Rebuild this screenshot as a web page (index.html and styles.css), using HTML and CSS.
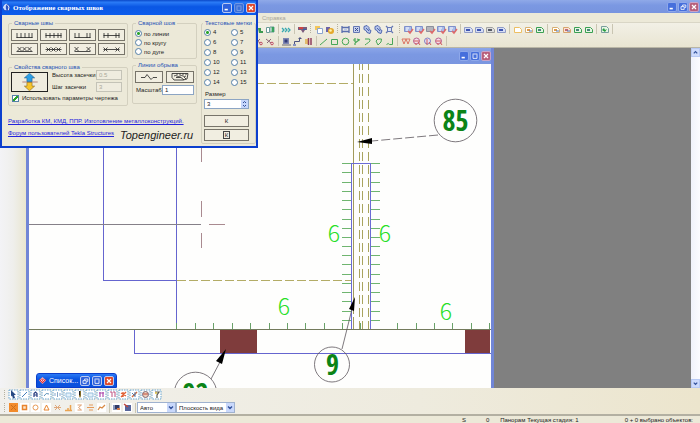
FILE: index.html
```html
<!DOCTYPE html>
<html lang="ru">
<head>
<meta charset="utf-8">
<title>Отображение сварных швов</title>
<link rel="stylesheet" href="styles.css">
</head>
<body>
<svg class="defs" aria-hidden="true">
  <defs>
    <symbol id="min" viewBox="0 0 10 10"><path d="M2 7h4" stroke="#fff" stroke-width="2"/></symbol>
    <symbol id="max" viewBox="0 0 10 10"><path d="M2 2.500h6M2.500 3v5h5V3" fill="none" stroke="#fff"/></symbol>
    <symbol id="restore" viewBox="0 0 10 10"><path d="M4.500 4V2.500h4v3H7M2.500 4.500h4v3.500h-4z" fill="none" stroke="#fff"/></symbol>
    <symbol id="close" viewBox="0 0 10 10"><path d="M2.500 2.500l5 5M7.500 2.500l-5 5" stroke="#fff" stroke-width="1.500"/></symbol>
    <symbol id="down" viewBox="0 0 8 8"><path d="M2 3l2 2 2-2" fill="none" stroke="#33529c" stroke-width="1.400"/></symbol>
    <symbol id="up" viewBox="0 0 8 8"><path d="M2 5l2-2 2 2" fill="none" stroke="#33529c" stroke-width="1.400"/></symbol>

    <symbol id="t-tree" viewBox="0 0 11 11"><path d="M1 2l4 3-3 3z" fill="#e0c030"/><path d="M4 4h3v3h2v2H5z" fill="#3c9a50"/></symbol>
    <symbol id="t-panel" viewBox="0 0 11 11"><path d="M1.500 3.500h3v5h-3zM5 3h4v5H5z" fill="#fff" stroke="#6c9a98"/><path d="M6.500 3h2.500v5H6.500z" fill="#38a25e"/></symbol>
    <symbol id="t-wave" viewBox="0 0 11 11"><path d="M1 4l2 2-2 2M4 4l2 2-2 2M7 4l2 2-2 2" fill="none" stroke="#38a9b0" stroke-width="1.300"/></symbol>
    <symbol id="t-filter" viewBox="0 0 11 11"><path d="M1 3h9v3H8l-2 3-2-3H1z" fill="#7a5b7c"/><path d="M2 3h4v2H2z" fill="#c44"/><path d="M6 5h3v1H6z" fill="#36a"/></symbol>
    <symbol id="t-copy" viewBox="0 0 11 11"><path d="M2 2h5v4H2z" fill="#f3c65a"/><path d="M4.500 4.500h5v5h-5z" fill="#fff" stroke="#8ba4cf"/></symbol>
    <symbol id="t-db" viewBox="0 0 11 11"><path d="M2 3h4v5H2z" fill="#6b62a8"/><circle cx="7" cy="7" r="3" fill="#e5a92c"/><circle cx="6.500" cy="6.500" r="1.300" fill="#fff2b0"/></symbol>
    <symbol id="t-dim" viewBox="0 0 11 11"><path d="M2 2v7M9 2v7M2 3.500h7M2 7.500h7" stroke="#5a6fae" stroke-width="1.300"/><path d="M4 4.500h3v2H4z" fill="#b9c7ea"/></symbol>
    <symbol id="t-box" viewBox="0 0 11 11"><path d="M2.500 2.500h6v6h-6z" fill="#c7d1ed" stroke="#6477b3"/><path d="M4 4l3 3M7 4L4 7" stroke="#34488d"/></symbol>
    <symbol id="t-cubes" viewBox="0 0 11 11"><path d="M2 2.500l3-1 2 2v2l2 1-1 3-3-1-1-2-2-1z" fill="#b7c5ea" stroke="#5068b0"/><path d="M4 4l3 3" stroke="#5068b0"/></symbol>
    <symbol id="t-cross" viewBox="0 0 11 11"><path d="M2 2l7 7M9 2L2 9" stroke="#6477b3" stroke-width="1.300"/><path d="M3.500 3.500h4v4h-4z" fill="#dbe2f5" stroke="#6477b3"/></symbol>
    <symbol id="t-check" viewBox="0 0 11 11"><path d="M1.500 2.500h7v5h-7z" fill="#aabbe8" stroke="#7f90cb"/><path d="M3 4h3M3 6h2" stroke="#fff"/><path d="M5 7l2 2 3-4" fill="none" stroke="#e06a6a" stroke-width="1.500"/></symbol>
    <symbol id="t-checkg" viewBox="0 0 11 11"><path d="M1.500 2.500h7v5h-7z" fill="#b5b5bc" stroke="#8b8f9c"/><path d="M5 7l2 2 3-4" fill="none" stroke="#e06a6a" stroke-width="1.500"/></symbol>
    <symbol id="t-view" viewBox="0 0 11 11"><path d="M1.500 3.500h6l2 2v3h-8z" fill="#d7def5" stroke="#8f9bc6"/><path d="M3 5h4v2H3z" fill="#3e55b0"/></symbol>
    <symbol id="t-viewk" viewBox="0 0 11 11"><path d="M1.500 3.500h6l2 2v3h-8z" fill="#dedede" stroke="#a0a0a0"/><path d="M3 5h4v2H3z" fill="#555a66"/></symbol>
    <symbol id="t-page" viewBox="0 0 11 11"><path d="M2.500 3.500h5l2 2v3h-7z" fill="#fff" stroke="#edbf63"/></symbol>
    <symbol id="t-pageo" viewBox="0 0 11 11"><path d="M2.500 3.500h5l2 2v3h-7z" fill="#fff" stroke="#d6b074"/><path d="M4 5h3v2H4z" fill="#e09a45"/><path d="M6 7h3" stroke="#507abb"/></symbol>
    <symbol id="t-pager" viewBox="0 0 11 11"><path d="M2.500 3.500h5l2 2v3h-7z" fill="#fbe1d4" stroke="#d7a46e"/><path d="M4 5h3v2H4z" fill="#c06b75"/><path d="M6 7h3" stroke="#507abb"/></symbol>
    <symbol id="t-pageg" viewBox="0 0 11 11"><path d="M2.500 3.500h5l2 2v3h-7z" fill="#e7f6e4" stroke="#3aa052"/><path d="M4 5h3v2H4z" fill="#4a8578"/></symbol>
    <symbol id="t-refresh" viewBox="0 0 11 11"><path d="M2.500 2.500h5l2 2v4h-7z" fill="#e7f6e4" stroke="#7a9e9d"/><path d="M3 6l2-2 1 2 2-1-2 3z" fill="#259b3f"/></symbol>

    <symbol id="d-cut" viewBox="0 0 11 11"><path d="M1 3l5 4M6 3L2 7" stroke="#8d6478"/><circle cx="7" cy="7.500" r="1.300" fill="none" stroke="#c04c66"/></symbol>
    <symbol id="d-sq" viewBox="0 0 11 11"><path d="M2 2h6v6H2z" fill="#8088b4"/><path d="M3.500 3.500h3v3h-3z" fill="#323b78"/><path d="M1 9h9" stroke="#667"/></symbol>
    <symbol id="d-step" viewBox="0 0 11 11"><path d="M2.500 9V5.500h5V3" fill="none" stroke="#4d5380"/><path d="M6 3h4L8 1z" fill="#4d5380"/><path d="M1 8h3v2H1z" fill="#8893c0"/></symbol>
    <symbol id="d-book" viewBox="0 0 11 11"><path d="M2 3h3v5H2z" fill="#e3bd6c"/><path d="M5.500 2v7M8 2v7" stroke="#903e5d" stroke-width="1.500"/></symbol>
    <symbol id="d-line" viewBox="0 0 11 11"><path d="M2 9l7-6" stroke="#47a757"/></symbol>
    <symbol id="d-rect" viewBox="0 0 11 11"><path d="M2.500 3.500h6v5h-6z" fill="none" stroke="#47a757"/></symbol>
    <symbol id="d-circ" viewBox="0 0 11 11"><circle cx="5.500" cy="5.500" r="3.300" fill="none" stroke="#47a757"/></symbol>
    <symbol id="d-dots" viewBox="0 0 11 11"><path d="M2 4h2M4 2v4M4 7l4-3M6 3l3 1M4 7v2" fill="none" stroke="#47a757" stroke-width="1.200"/></symbol>
    <symbol id="d-arc" viewBox="0 0 11 11"><path d="M3 3h4.500q1.500 2-1 3.500T3 9" fill="none" stroke="#47a757"/></symbol>
    <symbol id="d-poly" viewBox="0 0 11 11"><path d="M3 5l2-2h3.500L8 6 5 9z" fill="none" stroke="#47a757"/></symbol>
    <symbol id="d-cloud" viewBox="0 0 11 11"><path d="M8.500 2v6.500H5.500q-1-2-3 0" fill="none" stroke="#47a757"/></symbol>
    <symbol id="d-red" viewBox="0 0 11 11"><path d="M2 3l2 5 2-5 2 5 2-5M2 3h8" fill="none" stroke="#dc7664"/></symbol>
    <symbol id="d-mag" viewBox="0 0 11 11"><circle cx="5.500" cy="5" r="3" fill="#f4dcea" stroke="#ba6492"/><path d="M3 5h5M5 7v2M7 6l2 3" stroke="#d15b5b"/></symbol>
    <symbol id="d-vio" viewBox="0 0 11 11"><circle cx="5.500" cy="5" r="3" fill="#e8e0f6" stroke="#8580c0"/><path d="M5 3v6M7 6l2 3" stroke="#d15b5b"/></symbol>

    <symbol id="s-frame" viewBox="0 0 11 11"><path d="M1 1h9v9H1z" fill="#fff" stroke="#69a5cf" stroke-dasharray="1.500 1"/></symbol>
    <symbol id="s-arrow" viewBox="0 0 11 11"><use href="#s-frame"/><path d="M3 1l5 5H6l1 3-2 .500-1-3-1 1z" fill="#274a84"/></symbol>
    <symbol id="s-line" viewBox="0 0 11 11"><use href="#s-frame"/><path d="M3 8l5-5" stroke="#447ebb"/></symbol>
    <symbol id="s-a" viewBox="0 0 11 11"><use href="#s-frame"/><path d="M4 8V4.500l1.500-1.500L7 4.500V8M4 6h3" fill="none" stroke="#283d80" stroke-width="1.200"/></symbol>
    <symbol id="s-arc" viewBox="0 0 11 11"><use href="#s-frame"/><path d="M3 7q2-4 5-2" fill="none" stroke="#5c91b9"/></symbol>
    <symbol id="s-dim" viewBox="0 0 11 11"><use href="#s-frame"/><path d="M3 4v3M5.500 3v5M8 4v3" stroke="#86a5c8"/></symbol>
    <symbol id="s-sq" viewBox="0 0 11 11"><use href="#s-frame"/><path d="M3 4h5v4H3z" fill="#e3f1fa" stroke="#98c0dd"/></symbol>
    <symbol id="s-pen" viewBox="0 0 11 11"><use href="#s-frame"/><path d="M5 2h2v5L6 9 5 7z" fill="#806b28"/><path d="M5 2h1v4H5z" fill="#222"/></symbol>
    <symbol id="s-mag" viewBox="0 0 11 11"><use href="#s-frame"/><path d="M3 4h5M4 3v5M7 3v5" stroke="#ad4cad" stroke-width="1.200"/></symbol>
    <symbol id="s-pink" viewBox="0 0 11 11"><use href="#s-frame"/><path d="M3 3h2v5M6 3h2v5" fill="none" stroke="#bc4f7e"/></symbol>
    <symbol id="s-red" viewBox="0 0 11 11"><use href="#s-frame"/><path d="M3 8l5-5M3 4l5 3M5 3v5" stroke="#e06035" stroke-width="1.400"/></symbol>
    <symbol id="s-mix" viewBox="0 0 11 11"><use href="#s-frame"/><path d="M3 8l5-5" stroke="#d06a3e" stroke-width="1.500"/><path d="M3 4l3 3M6 3v5" stroke="#527dad"/></symbol>
    <symbol id="s-globe" viewBox="0 0 11 11"><use href="#s-frame"/><circle cx="5.500" cy="5.500" r="3" fill="#f1d1bd" stroke="#7a6876"/><path d="M3 5h5" stroke="#ba4c3d"/></symbol>
    <symbol id="s-bulb" viewBox="0 0 11 11"><use href="#s-frame"/><path d="M4 3h4L6 6v3" fill="none" stroke="#5a5a50" stroke-width="1.200"/><circle cx="5" cy="4" r="1" fill="#dfc340"/></symbol>

    <symbol id="o-x" viewBox="0 0 11 11"><path d="M1 1h9v9H1z" fill="#f28b2b"/><path d="M3 3l5 5M8 3L3 8" stroke="#c96f1c"/></symbol>
    <symbol id="o-sq" viewBox="0 0 11 11"><path d="M1 1h9v9H1z" fill="#fff"/><path d="M3.500 3.500h4v4h-4z" fill="#ffe4c6" stroke="#e8842e" stroke-width="1.500"/></symbol>
    <symbol id="o-circ" viewBox="0 0 11 11"><path d="M1 1h9v9H1z" fill="#fff"/><circle cx="5.500" cy="5.500" r="2.500" fill="none" stroke="#e89a55"/></symbol>
    <symbol id="o-tri" viewBox="0 0 11 11"><path d="M1 1h9v9H1z" fill="#fff"/><path d="M5.500 3L8 8H3z" fill="none" stroke="#e8842e"/></symbol>
    <symbol id="o-cross" viewBox="0 0 11 11"><path d="M3 3l5 5M8 3L3 8M2 5.500h7" stroke="#dfa77b"/></symbol>
    <symbol id="o-perp" viewBox="0 0 11 11"><path d="M2 8.500h7M7.500 3v5M5 6v2" stroke="#eba451" stroke-width="1.500"/></symbol>
    <symbol id="o-hour" viewBox="0 0 11 11"><path d="M1 1h9v9H1z" fill="#fff"/><path d="M3.500 3h4l-3 2.500 3 2.500h-4" fill="none" stroke="#e0a070"/></symbol>
    <symbol id="o-ext" viewBox="0 0 11 11"><path d="M2 5.500h3M4 3h4M5 5.500h4M4 8h4" stroke="#e59a5a"/></symbol>
    <symbol id="o-free" viewBox="0 0 11 11"><path d="M1 1h9v9H1z" fill="#fff"/><path d="M2 8l2-3 2 1 3-3" fill="none" stroke="#d98a45" stroke-width="1.300"/></symbol>
    <symbol id="o-dark" viewBox="0 0 11 11"><path d="M1 1h9v9H1z" fill="#fff"/><path d="M2 3h7v5H2z" fill="#8a98bb"/><path d="M4 3h4v4H4z" fill="#333b66"/><path d="M6 6h3v2H6z" fill="#d77d4a"/></symbol>
    <symbol id="o-dark2" viewBox="0 0 11 11"><path d="M1 1h9v9H1z" fill="#fff"/><path d="M3 3h6v6H3z" fill="#57659b"/><path d="M2 2l4 3" stroke="#c5483c" stroke-width="1.500"/></symbol>
  </defs>
</svg>

<div class="app">
  <header class="app-title">
    <button class="win muted" aria-label="Свернуть"><svg><use href="#min"/></svg></button>
    <button class="win muted" aria-label="Восстановить"><svg><use href="#restore"/></svg></button>
    <button class="win muted red" aria-label="Закрыть"><svg><use href="#close"/></svg></button>
  </header>
  <nav class="menu"><a href="#">Справка</a></nav>
  <div class="bars">
    <div class="bar offset">
      <button aria-label="Дерево"><svg><use href="#t-tree"/></svg></button><button aria-label="Панель"><svg><use href="#t-panel"/></svg></button>
      <i class="sep"></i>
      <button aria-label="Волны"><svg><use href="#t-wave"/></svg></button>
      <i class="sep"></i>
      <button aria-label="Фильтр"><svg><use href="#t-filter"/></svg></button>
      <i class="sep grip"></i>
      <button aria-label="Копия"><svg><use href="#t-copy"/></svg></button><button aria-label="База"><svg><use href="#t-db"/></svg></button>
      <i class="sep grip"></i>
      <button aria-label="Размер"><svg><use href="#t-dim"/></svg></button><button aria-label="Блок"><svg><use href="#t-box"/></svg></button><button aria-label="Блоки"><svg><use href="#t-cubes"/></svg></button><button aria-label="Сборка"><svg><use href="#t-cubes"/></svg></button><button aria-label="Узел"><svg><use href="#t-cross"/></svg></button>
      <i class="sep grip wide"></i>
      <button aria-label="Метка детали"><svg><use href="#t-check"/></svg></button><button aria-label="Метка болта"><svg><use href="#t-check"/></svg></button><button aria-label="Метка шва"><svg><use href="#t-checkg"/></svg></button><button aria-label="Метка узла"><svg><use href="#t-check"/></svg></button><button aria-label="Метка вида"><svg><use href="#t-check"/></svg></button>
      <i class="sep"></i>
      <button aria-label="Вид 1"><svg><use href="#t-view"/></svg></button><button aria-label="Вид 2"><svg><use href="#t-view"/></svg></button><button aria-label="Вид 3"><svg><use href="#t-viewk"/></svg></button><button aria-label="Вид 4"><svg><use href="#t-view"/></svg></button>
      <i class="sep"></i>
      <button aria-label="Лист"><svg><use href="#t-page"/></svg></button><button aria-label="Лист 2"><svg><use href="#t-pageo"/></svg></button><button aria-label="Лист 3"><svg><use href="#t-pageg"/></svg></button>
      <i class="sep"></i>
      <button aria-label="Чертёж 1"><svg><use href="#t-pageo"/></svg></button><button aria-label="Чертёж 2"><svg><use href="#t-pager"/></svg></button><button aria-label="Чертёж 3"><svg><use href="#t-pageg"/></svg></button><button aria-label="Чертёж 4"><svg><use href="#t-pageg"/></svg></button>
      <i class="sep"></i>
      <button aria-label="Обновить"><svg><use href="#t-refresh"/></svg></button>
      <i class="sep narrow"></i>
    </div>
    <div class="bar offset">
      <button aria-label="Обрезать"><svg><use href="#d-cut"/></svg></button><button aria-label="Разделить"><svg><use href="#d-cut"/></svg></button>
      <i class="sep"></i>
      <button aria-label="Символ"><svg><use href="#d-sq"/></svg></button><button aria-label="Выноска"><svg><use href="#d-step"/></svg></button><button aria-label="Каталог"><svg><use href="#d-book"/></svg></button>
      <i class="sep narrow"></i>
      <button aria-label="Линия"><svg><use href="#d-line"/></svg></button><button aria-label="Прямоугольник"><svg><use href="#d-rect"/></svg></button><button aria-label="Окружность"><svg><use href="#d-circ"/></svg></button><button aria-label="Точки"><svg><use href="#d-dots"/></svg></button><button aria-label="Дуга"><svg><use href="#d-arc"/></svg></button><button aria-label="Многоугольник"><svg><use href="#d-poly"/></svg></button><button aria-label="Облако"><svg><use href="#d-cloud"/></svg></button>
      <i class="sep"></i>
      <button aria-label="Швы"><svg><use href="#d-red"/></svg></button><button aria-label="Швы 2"><svg><use href="#d-mag"/></svg></button><button aria-label="Швы 3"><svg><use href="#d-vio"/></svg></button><button aria-label="Швы 4"><svg><use href="#d-mag"/></svg></button>
      <i class="sep narrow"></i>
    </div>
  </div>

  <main class="workspace">
    <section class="mdi">
      <header class="mdi-title">
        <button class="win muted" aria-label="Свернуть"><svg><use href="#min"/></svg></button>
        <button class="win muted" aria-label="Развернуть"><svg><use href="#max"/></svg></button>
        <button class="win muted red" aria-label="Закрыть"><svg><use href="#close"/></svg></button>
      </header>
      <div class="canvas">
        <svg viewBox="29 64 462 324" preserveAspectRatio="xMinYMin slice" role="img" aria-label="Чертёж">
          <g fill="none" shape-rendering="crispEdges">
            <path d="M103.500 64v216.500H176.500M176.500 64v265" stroke="#6565cf"/>
            <path d="M29 224.500h172" stroke="#858088"/>
            <path d="M201.500 146v16M201.500 201v16M201.500 233v15M209 224.500h16" stroke="#a98a90"/>
            <path d="M134.500 329v24.500H491" stroke="#6565cf"/>
            <path d="M220 330h37v23h-37zM465 330h25v23h-25z" fill="#7f3c3c"/>
            <path d="M177 280.500h175M243 83.500h110" stroke="#b3ac66" stroke-dasharray="9 3"/>
            <path d="M353.500 64v265" stroke="#a29a5c" stroke-dasharray="250 3"/>
            <path d="M359.500 64v265M362.500 64v265M368.500 64v265" stroke="#a9a45f" stroke-dasharray="9 4" stroke-dashoffset="3"/>
            <path d="M29 329.500h462" stroke="#737a5c"/>
            <path d="M351.500 329V163.500h19V329" stroke="#6b6bd6"/>
            <path d="M176.500 323v6M195.500 323v6M213.500 323v6M232.500 323v6M250.500 323v6M269.500 323v6M287.500 323v6M305.500 323v6M324.500 323v6M342.500 323v6M360.500 323v6M397.500 323v6M416.500 323v6M434.500 323v6M452.500 323v6M471.500 323v6M489.500 323v6" stroke="#69a169"/>
            <path d="M342 163.500h9m20 0h9M342 172.500h9m20 0h9M342 182.500h9m20 0h9M342 191.500h9m20 0h9M342 200.500h9m20 0h9M342 209.500h9m20 0h9M342 219.500h9m20 0h9M342 228.500h9m20 0h9M342 237.500h9m20 0h9M342 246.500h9m20 0h9M342 255.500h9m20 0h9M342 264.500h9m20 0h9M342 274.500h9m20 0h9M342 283.500h9m20 0h9M342 292.500h9m20 0h9M342 301.500h9m20 0h9M342 311.500h9m20 0h9M342 320.500h9m20 0h9" stroke="#6fb56f"/>
          </g>
          <g fill="none" stroke="#5d575d" stroke-width=".8">
            <circle cx="455.500" cy="120.500" r="21.300"/>
            <circle cx="332" cy="364.500" r="17.500"/>
            <circle cx="195.500" cy="393.500" r="21.300"/>
            <path d="M438 135l-66 6" stroke-dasharray="9 3"/>
            <path d="M342 349l10-40M211 379l9-17"/>
          </g>
          <path d="M357 142l15-4v6zM355 297l-6 12 5 2zM226 349l-10 12 6 3z"/>
          <g class="mark"><text x="455.500" y="131">85</text><text x="332.500" y="375">9</text><text x="195.500" y="404">92</text></g>
          <g class="weld"><text x="334" y="242">6</text><text x="385" y="242">6</text><text x="446" y="320">6</text><text x="284" y="315">6</text></g>
        </svg>
      </div>
    </section>
    <div class="scroll">
      <button aria-label="Вверх"><svg><use href="#up"/></svg></button>
      <button aria-label="Вниз"><svg><use href="#down"/></svg></button>
    </div>
    <section class="list-window">
      <svg class="logo" viewBox="0 0 10 10"><path d="M5 1l4 4-4 4-4-4z" fill="#f3a5a8"/><path d="M1 4h8L5 8z" fill="#e02832"/><path d="M3 4l2 2 2-2" fill="none" stroke="#fff"/></svg>
      <span>Список...</span>
      <button class="win" aria-label="Восстановить"><svg><use href="#restore"/></svg></button>
      <button class="win" aria-label="Развернуть"><svg><use href="#max"/></svg></button>
      <button class="win red" aria-label="Закрыть"><svg><use href="#close"/></svg></button>
    </section>
  </main>

  <div class="bottom">
    <div class="bar">
      <i class="sep grip wide"></i>
      <button aria-label="Выбор"><svg><use href="#s-arrow"/></svg></button><button aria-label="Линии"><svg><use href="#s-line"/></svg></button><button aria-label="Текст"><svg><use href="#s-a"/></svg></button><button aria-label="Дуги"><svg><use href="#s-arc"/></svg></button><button aria-label="Метки"><svg><use href="#s-dim"/></svg></button><button aria-label="Размеры"><svg><use href="#s-sq"/></svg></button><button aria-label="Карандаш"><svg><use href="#s-pen"/></svg></button><button aria-label="Виды"><svg><use href="#s-sq"/></svg></button><button aria-label="Сетки"><svg><use href="#s-mag"/></svg></button><button aria-label="Оси"><svg><use href="#s-pink"/></svg></button><button aria-label="Швы"><svg><use href="#s-red"/></svg></button><button aria-label="Детали"><svg><use href="#s-mix"/></svg></button><button aria-label="Сечения"><svg><use href="#s-globe"/></svg></button><button aria-label="Болты"><svg><use href="#s-bulb"/></svg></button>
    </div>
    <div class="bar">
      <i class="sep grip wide"></i>
      <button aria-label="Точки"><svg><use href="#o-x"/></svg></button><button aria-label="Концы"><svg><use href="#o-sq"/></svg></button><button aria-label="Центры"><svg><use href="#o-circ"/></svg></button><button aria-label="Середины"><svg><use href="#o-tri"/></svg></button><button aria-label="Пересечения"><svg><use href="#o-cross"/></svg></button><button aria-label="Перпендикуляры"><svg><use href="#o-perp"/></svg></button><button aria-label="Ближайшие"><svg><use href="#o-hour"/></svg></button><button aria-label="Продолжения"><svg><use href="#o-ext"/></svg></button><button aria-label="Свободно"><svg><use href="#o-free"/></svg></button>
      <i class="sep narrow"></i>
      <button aria-label="Опорные"><svg><use href="#o-dark"/></svg></button><button aria-label="Геометрия"><svg><use href="#o-dark2"/></svg></button>
      <i class="sep narrow"></i>
      <span class="combo"><select aria-label="Привязка"><option>Авто</option></select><svg><use href="#down"/></svg></span>
      <span class="combo long"><select aria-label="Плоскость"><option>Плоскость вида</option></select><svg><use href="#down"/></svg></span>
    </div>
  </div>
  <footer class="status">
    <span>S</span><span>0</span><span>Панорам</span><span>Текущая стадия: 1</span><span>0 + 0 выбрано объектов:</span>
  </footer>
</div>

<form class="dialog">
  <header class="dialog-title">
    <svg class="logo" viewBox="0 0 10 10"><circle cx="5" cy="5" r="4" fill="#2a50c4"/><path d="M1 5q2-5 5-4-3 2-1 7-3 0-4-3z" fill="#c9dcff"/><path d="M6 2q3 2 1 6" fill="none" stroke="#fff"/></svg>
    <h1>Отображение сварных швов</h1>
    <button type="button" class="win" aria-label="Свернуть"><svg><use href="#min"/></svg></button>
    <button type="button" class="win off" aria-label="Развернуть"><svg><use href="#max"/></svg></button>
    <button type="button" class="win red" aria-label="Закрыть"><svg><use href="#close"/></svg></button>
  </header>
  <div class="dialog-body">
    <div class="col-a">
      <fieldset>
        <legend>Сварные швы</legend>
        <div class="welds">
          <button type="button" aria-label="Шов 1"><svg viewBox="0 0 24 10"><path d="M4 7.500h16M4.500 3v5M8.500 3v5M12.500 3v5M16.500 3v5M19.500 3v5"/></svg></button>
          <button type="button" aria-label="Шов 2"><svg viewBox="0 0 24 10"><path d="M4 5.500h16M4.500 3v5M8.500 3v5M12.500 3v5M16.500 3v5M19.500 3v5"/></svg></button>
          <button type="button" aria-label="Шов 3"><svg viewBox="0 0 24 10"><path d="M4 7.500h16M4.500 3v5M8.500 3v5M16.500 3v5M19.500 3v5"/></svg></button>
          <button type="button" aria-label="Шов 4"><svg viewBox="0 0 24 10"><path d="M4 5.500h16M4.500 3v5M8.500 3v5M16.500 3v5M19.500 3v5"/></svg></button>
          <button type="button" aria-label="Шов 5"><svg viewBox="0 0 24 10"><path d="M4 7.500h16M5 3l4 4M9 3L5 7M10 3l4 4M14 3l-4 4M15 3l4 4M19 3l-4 4"/></svg></button>
          <button type="button" aria-label="Шов 6"><svg viewBox="0 0 24 10"><path d="M4 5.500h16M5 3.500l4 4M9 3.500l-4 4M10 3.500l4 4M14 3.500l-4 4M15 3.500l4 4M19 3.500l-4 4"/></svg></button>
          <button type="button" aria-label="Шов 7"><svg viewBox="0 0 24 10"><path d="M4 7.500h16M4 3l4 4M8 3L4 7M16 3l4 4M20 3l-4 4"/></svg></button>
          <button type="button" aria-label="Шов 8"><svg viewBox="0 0 24 10"><path d="M4 5.500h16M4 3.500l4 4M8 3.500l-4 4M16 3.500l4 4M20 3.500l-4 4"/></svg></button>
        </div>
      </fieldset>
      <fieldset class="props">
        <legend>Свойства сварного шва</legend>
        <div class="props-row">
          <button type="button" class="flip" aria-label="Сторона шва"><svg viewBox="0 0 34 17"><path d="M10 8.500h15" stroke="#b98a80"/><path d="M17 0l5 4.500h-2.500V8h-5V4.500H12z" fill="#2c9fe6" stroke="#27638f" stroke-width=".6"/><path d="M17 17l5-4.500h-2.500V9h-5v3.500H12z" fill="#f7c52c" stroke="#8a6a20" stroke-width=".6"/></svg></button>
          <div class="pairs">
            <label for="h">Высота засечки</label><input id="h" value="0.5" disabled>
            <label for="st">Шаг засечки</label><input id="st" value="3" disabled>
          </div>
        </div>
        <label class="tick"><input type="checkbox" checked>Использовать параметры чертежа</label>
      </fieldset>
    </div>
    <div class="col-b">
      <fieldset class="kinds">
        <legend>Сварной шов</legend>
        <label><input type="radio" name="kind" checked>по линии</label>
        <label><input type="radio" name="kind">по кругу</label>
        <label><input type="radio" name="kind">по дуге</label>
      </fieldset>
      <fieldset class="breaks">
        <legend>Линии обрыва</legend>
        <div class="break-row">
          <button type="button" aria-label="Обрыв"><svg viewBox="0 0 24 10"><path d="M4 5.500h4l2-3 4 5 2-2h4"/></svg></button>
          <button type="button" aria-label="Волнистый обрыв"><svg viewBox="0 0 24 10"><path d="M4 1.500v4l2 2.500h9l4-1 1-5.500M4 1.500h16M6 4q1.500-1 3 0t3 0 3 0 3 0M8 5.500h5l3 2.500M9 1.500v1.500M12 1.500v1.500M15 1.500v1.500M18 1.500v1.500M16 5l2 2"/></svg></button>
        </div>
        <div class="break-row scale"><label for="sc">Масштаб</label><input id="sc" value="1"></div>
      </fieldset>
    </div>
    <fieldset class="col-c">
      <legend>Текстовые метки</legend>
      <div class="marks">
        <label><input type="radio" name="m" checked>4</label><label><input type="radio" name="m">5</label>
        <label><input type="radio" name="m">6</label><label><input type="radio" name="m">7</label>
        <label><input type="radio" name="m">8</label><label><input type="radio" name="m">9</label>
        <label><input type="radio" name="m">10</label><label><input type="radio" name="m">11</label>
        <label><input type="radio" name="m">12</label><label><input type="radio" name="m">13</label>
        <label><input type="radio" name="m">14</label><label><input type="radio" name="m">15</label>
      </div>
      <label class="size" for="size">Размер</label>
      <div class="spin"><input id="size" value="3"><svg viewBox="0 0 7 8"><path d="M0 0h7v8H0z" fill="#c6d6fb"/><path d="M2 3l1.500-1.500L5 3M2 5l1.500 1.500L5 5" fill="none" stroke="#33529c"/></svg></div>
      <button type="button">К</button>
      <button type="button"><b class="boxed">К</b></button>
    </fieldset>
    <div class="links">
      <a href="#">Разработка КМ, КМД, ППР. Изготовление металлоконструкций.</a>
      <div><a href="#">Форум пользователей Tekla Structures</a><span class="brand">Topengineer.ru</span></div>
    </div>
  </div>
</form>
</body>
</html>
```
FILE: styles.css
```css
* { box-sizing: border-box; }

body {
  margin: 0;
  font: 6px/8px "Liberation Sans", sans-serif;
  color: #222;
}

button, input, select { font: inherit; color: inherit; margin: 0; padding: 0; }
button { border: 0; background: none; display: block; }
svg { display: block; }
.defs { position: absolute; width: 0; height: 0; }

.app {
  display: flex;
  flex-direction: column;
  height: 100vh;
  background: #ece9d8;
  overflow: hidden;
}

/* window buttons */
.win {
  width: 10px;
  height: 10px;
  border: 1px solid #b9c9f2;
  border-radius: 2px;
  background: #2f62dc;
  flex: none;
}
.win svg { width: 8px; height: 8px; }
.win.muted { background: #466fdc; border-color: #8ea8ea; }
.win.off { background: #3a6fd8; border-color: #6f97e6; }
.win.off svg { opacity: .4; }
.win.red { background: #e0492b; }
.win.muted.red { background: #b8607c; border-color: #c9a4c8; }

.app-title {
  display: flex;
  justify-content: flex-end;
  align-items: center;
  gap: 1px;
  height: 13px;
  padding-right: 1px;
  background: linear-gradient(#8fa9e8, #7b98e2 40%, #7894df);
}
.menu { height: 10px; padding: 1px 0 0 262px; border-bottom: 1px solid #d9d6c6; }
.menu a { color: #a9a698; text-decoration: none; display: block; }

.bars { border-bottom: 1px solid #b9b6a6; background: linear-gradient(#f2f0e6, #e9e5d2); }
.bar { display: flex; align-items: center; height: 12px; }
.bar.offset { padding-left: 254px; }
.bar button { width: 11px; height: 11px; flex: none; }
.bar button svg { width: 11px; height: 11px; }
.sep { width: 5px; height: 10px; flex: none; background: linear-gradient(#c9c5b2, #c9c5b2) center / 1px 100% no-repeat; }
.sep.grip { background: repeating-linear-gradient(#b5b19f 0 1px, transparent 1px 2px) center / 1px 100% no-repeat; }
.sep.wide { width: 8px; }
.sep.narrow { width: 4px; }

.workspace {
  position: relative;
  flex: 1;
  min-height: 0;
  display: grid;
  grid-template-columns: 26px minmax(0, 468fr) minmax(0, 197fr) 9px;
  background: #808080;
}
.workspace::before { content: ""; background: linear-gradient(90deg, #f3f3f6, #efefec 50%, #e9e6d0); }

.mdi { display: flex; flex-direction: column; min-height: 0; border: solid #7186d6; border-width: 0 3px; }
.mdi-title {
  display: flex;
  justify-content: flex-end;
  align-items: center;
  gap: 1px;
  height: 16px;
  background: linear-gradient(#8ba5e8, #7b98e2 40%, #7a96e0);
  flex: none;
}
.canvas { flex: 1; min-height: 0; background: #fefefd; overflow: hidden; }
.canvas svg { width: 100%; height: 100%; }
.mark { font: bold 28px "Open Sans Condensed", "Roboto Condensed", "Noto Sans CJK SC", sans-serif; fill: #0b8417; text-anchor: middle; }
.weld { font: 300 23px "Noto Sans CJK SC", sans-serif; fill: #27df27; text-anchor: middle; }

.scroll {
  grid-column: 4;
  display: flex;
  flex-direction: column;
  justify-content: space-between;
  background: linear-gradient(90deg, #f0f2fb, #fbfbff);
}
.scroll button { height: 9px; border: 1px solid #b7c9f5; background: #cddafc; }
.scroll svg { width: 7px; height: 7px; }

.list-window {
  position: absolute;
  left: 36px;
  bottom: 0;
  display: flex;
  align-items: center;
  gap: 2px;
  height: 15px;
  padding: 0 2px 0 1px;
  border: 1px solid #0b3ecb;
  border-radius: 3px 3px 0 0;
  background: linear-gradient(#2b7af5, #0a55e2 40%, #0b50dc);
  color: #fff;
  font: 7px/9px "Liberation Sans", sans-serif;
}
.logo { width: 9px; height: 9px; flex: none; }

.bottom { background: linear-gradient(90deg, #f1f0ec, #eeebde 60%, #ece5cd); }
.bottom .bar { height: 13px; }
.combo { position: relative; width: 39px; height: 11px; flex: none; }
.combo.long { width: 59px; }
.combo select {
  appearance: none;
  display: block;
  width: 100%;
  height: 100%;
  padding: 0 2px;
  border: 1px solid #9fb2cf;
  border-radius: 0;
  background: #fff;
}
.combo svg { position: absolute; right: 1px; top: 1px; width: 8px; height: 9px; background: #c9d8fb; pointer-events: none; }

.status {
  display: grid;
  grid-template-columns: 24fr 14fr 27fr 97fr 75fr;
  padding: 1px 0 0 66%;
  height: 9px;
  border-top: 2px solid #b3b0a2;
  line-height: 6px;
  white-space: nowrap;
}

/* weld dialog */
.dialog {
  position: absolute;
  left: 0;
  top: 0;
  width: 258px;
  border: 2px solid #0c3fce;
  border-top: 0;
  background: #ece9d8;
}
.dialog-title {
  display: flex;
  align-items: center;
  gap: 2px;
  height: 15px;
  background: linear-gradient(#0a48c8, #2a7bf6 15%, #0a57e4 45%, #0c5cec);
}
.dialog-title h1 { flex: 1; margin: 0; color: #fff; font: bold 7px/10px "Liberation Serif", serif; }
.dialog-body {
  display: grid;
  grid-template-columns: 120px 65px minmax(0, 1fr);
  grid-template-rows: 92px auto;
  column-gap: 4px;
  padding: 4px 0 2px 6px;
}
.dialog fieldset { margin: 0; padding: 0 2px 2px; border: 1px solid #d3d0bf; border-radius: 2px; min-width: 0; }
.dialog legend { padding: 0 2px; color: #2552b5; margin-left: 1px; height: 8px; white-space: nowrap; }
.dialog label { white-space: nowrap; }

.welds { display: grid; grid-template-columns: repeat(4, 1fr); gap: 2px; padding-top: 2px; }
.welds button, .break-row button, .col-c button {
  height: 12px;
  border: 1px solid #77746a;
  background: #f1eee1;
}
.welds svg, .break-row svg { width: 100%; height: 10px; fill: none; stroke: #222; stroke-width: .8; }

.dialog .props { margin-top: 5px; }
.props-row { display: flex; gap: 4px; padding-top: 1px; }
.flip { width: 37px; height: 20px; border: 1px solid #222; background: #efecdf; }
.flip svg { width: 100%; height: 18px; }
.pairs { flex: 1; display: grid; grid-template-columns: 44px 26px; row-gap: 1px; align-items: center; margin-top: -2px; }
.dialog input:not([type]) { width: 100%; height: 10px; border: 1px solid #8ca5c4; background: #fff; padding: 0 2px; }
.dialog input:disabled { background: #efecdf; border-color: #c4c3b7; color: #aaa89a; }
.tick { display: flex; align-items: center; gap: 3px; padding: 2px 0 1px 1px; }
.tick input, .dialog [type="radio"] {
  appearance: none;
  width: 7px;
  height: 7px;
  border: 1px solid #5480a8;
  background: #fff;
  flex: none;
}
.tick input:checked { background: linear-gradient(135deg, transparent 40%, #2ba32b 40% 65%, transparent 65%) #fff; }
.dialog [type="radio"] { border-radius: 50%; }
.dialog [type="radio"]:checked { background: radial-gradient(#2ba32b 0 1px, #fff 2px); }

.kinds label, .marks label { display: flex; align-items: center; gap: 2px; height: 9px; }
.dialog .kinds { padding-top: 2px; }
.dialog .breaks { margin-top: 2px; padding-bottom: 8px; }
.break-row { display: grid; grid-template-columns: 1fr 1fr; gap: 3px; align-items: center; padding-top: 2px; }
.break-row label { padding-left: 1px; }
.break-row.scale { grid-template-columns: 26px 1fr; gap: 1px; }

.dialog .col-c { grid-row: 1 / 3; grid-column: 3; padding: 0 1px; }
.dialog .col-c legend { margin-left: 0; }
.marks { display: grid; grid-template-columns: 27px 1fr; padding-left: 1px; }
.marks label { height: 10px; }
.size { display: block; padding: 3px 0 1px 2px; }
.spin { display: grid; grid-template-columns: 1fr; width: 45px; margin: 0 0 6px 1px; }
.spin input, .spin svg { grid-area: 1 / 1; }
.spin svg { width: 7px; height: 8px; place-self: center end; margin-right: 1px; z-index: 1; }
.col-c button { width: 45px; margin: 0 0 2px 1px; }
.boxed { display: inline-block; border: 1px solid #444; padding: 0 1px; font-weight: normal; line-height: 6px; }

.links { grid-column: 1 / 3; display: flex; flex-direction: column; gap: 4px; padding-top: 6px; white-space: nowrap; }
.links a { color: #2424dc; }
.links div { display: grid; grid-template-columns: 112px 1fr; align-items: start; }
.brand { font: italic 11px/12px "Liberation Sans", sans-serif; }
```
